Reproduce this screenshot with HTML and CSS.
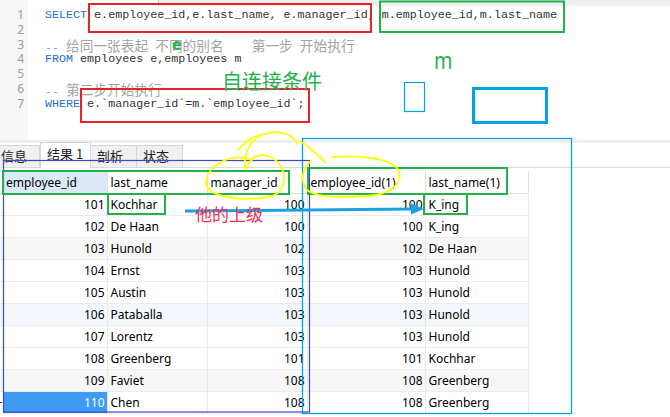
FILE: index.html
```html
<!DOCTYPE html>
<html>
<head>
<meta charset="utf-8">
<link rel="stylesheet" href="styles.css">
</head>
<body>
<div class="app">
  <div class="editor">
    <div class="gutter">
      <div>1</div><div>2</div><div>3</div><div>4</div><div>5</div><div>6</div><div>7</div>
    </div>
    <div class="code">
      <div class="ln"><span class="kw">SELECT</span> e.employee_id,e.last_name, e.manager_id, m.employee_id,m.last_name</div>
      <div class="ln"></div>
      <div class="ln cm">-- <span class="cjk">给同一张表起</span> <span class="cjk">不同的别名</span>    <span class="cjk">第一步</span> <span class="cjk">开始执行</span></div>
      <div class="ln"><span class="kw">FROM</span> employees e,employees m</div>
      <div class="ln"></div>
      <div class="ln cm">-- <span class="cjk">第二步开始执行</span></div>
      <div class="ln"><span class="kw">WHERE</span> e.`manager_id`=m.`employee_id`;</div>
    </div>
  </div>
  <div class="sep"></div>
  <div class="tabs">
    <div class="tab first">信息</div>
    <div class="tab active">结果 1</div>
    <div class="tab">剖析</div>
    <div class="tab">状态</div>
  </div>
  <table class="grid">
    <colgroup>
      <col class="c0"><col class="c1"><col class="c2"><col class="c3"><col class="c4"><col class="c5">
    </colgroup>
    <thead>
      <tr><th></th><th class="selhead">employee_id</th><th>last_name</th><th>manager_id</th><th>employee_id(1)</th><th>last_name(1)</th></tr>
    </thead>
    <tbody>
      <tr><td></td><td class="n">101</td><td>Kochhar</td><td class="n">100</td><td class="n">100</td><td>K_ing</td></tr>
      <tr><td></td><td class="n">102</td><td>De Haan</td><td class="n">100</td><td class="n">100</td><td>K_ing</td></tr>
      <tr class="alt"><td></td><td class="n">103</td><td>Hunold</td><td class="n">102</td><td class="n">102</td><td>De Haan</td></tr>
      <tr><td></td><td class="n">104</td><td>Ernst</td><td class="n">103</td><td class="n">103</td><td>Hunold</td></tr>
      <tr><td></td><td class="n">105</td><td>Austin</td><td class="n">103</td><td class="n">103</td><td>Hunold</td></tr>
      <tr class="hov"><td></td><td class="n">106</td><td>Pataballa</td><td class="n">103</td><td class="n">103</td><td>Hunold</td></tr>
      <tr><td></td><td class="n">107</td><td>Lorentz</td><td class="n">103</td><td class="n">103</td><td>Hunold</td></tr>
      <tr><td></td><td class="n">108</td><td>Greenberg</td><td class="n">101</td><td class="n">101</td><td>Kochhar</td></tr>
      <tr class="alt"><td></td><td class="n">109</td><td>Faviet</td><td class="n">108</td><td class="n">108</td><td>Greenberg</td></tr>
      <tr><td class="ind"></td><td class="n sel">110</td><td>Chen</td><td class="n">108</td><td class="n">108</td><td>Greenberg</td></tr>
    </tbody>
  </table>

  <div class="topstrip"></div>

  <svg class="overlay" width="670" height="417" viewBox="0 0 670 417">
    <rect x="89" y="4" width="282" height="28" fill="none" stroke="#e8222a" stroke-width="2"/>
    <rect x="380" y="1.5" width="184" height="30.5" fill="none" stroke="#22b14c" stroke-width="2"/>
    <rect x="81" y="89" width="228" height="33" fill="none" stroke="#e8222a" stroke-width="2"/>
    <rect x="404.5" y="82.5" width="20" height="29" fill="none" stroke="#00a2e8" stroke-width="1.2"/>
    <rect x="473.5" y="88.5" width="73" height="34" fill="none" stroke="#00a2e8" stroke-width="3"/>
    <rect x="302.5" y="138.5" width="269" height="275" fill="none" stroke="#00a2e8" stroke-width="1.3"/>
    <rect x="3.5" y="160.5" width="306" height="251.5" fill="none" stroke="#3f48cc" stroke-width="1.2"/>
    <rect x="3" y="171" width="286" height="23" fill="none" stroke="#22b14c" stroke-width="2"/>
    <rect x="308" y="168" width="199" height="26" fill="none" stroke="#22b14c" stroke-width="2"/>
    <rect x="108" y="194" width="57" height="20" fill="none" stroke="#22b14c" stroke-width="2"/>
    <rect x="424" y="194" width="43" height="20" fill="none" stroke="#22b14c" stroke-width="2"/>
    <path d="M185 211 L413 209" stroke="#1ba1e2" stroke-width="3" fill="none"/>
    <polygon points="411,203.5 424,209 411,214.5" fill="#1ba1e2"/>
    <g fill="none" stroke="#ffff00" stroke-width="1.8" stroke-linecap="round">
      <path d="M252 160 C 232 152, 207 165, 206 182 C 206 198, 245 202, 272 196 C 290 190, 287 162, 268 156 C 258 153, 250 158, 247 168"/>
      <path d="M245 168 C 244 152, 250 140, 262 135 C 276 129, 293 133, 297 144"/>
      <path d="M238 150 C 244 143, 252 137, 260 135"/>
      <path d="M300 141 C 310 147, 318 155, 325 162"/>
      <path d="M332 157 C 360 155, 393 158, 399 171 C 402 186, 388 195, 366 196 C 342 198, 318 198, 307 190 C 300 181, 302 168, 311 161"/>
    </g>
  </svg>
  <span class="note note-e">e</span>
  <span class="note note-self">自连接条件</span>
  <span class="note note-m">m</span>
  <span class="note note-up">他的上级</span>
</div>
</body>
</html>
```

FILE: styles.css
```css
* { box-sizing: border-box; }
html, body { margin: 0; padding: 0; background: #fff; }
body { width: 670px; height: 417px; overflow: hidden; }

.app {
  position: relative;
  width: 670px;
  height: 417px;
  overflow: hidden;
  font-family: "Noto Sans", "Noto Sans CJK SC", sans-serif;
  color: #000;
}

/* editor */
.editor {
  display: flex;
  height: 140px;
}
.gutter {
  width: 28px;
  background: #f7f7f7;
  padding-top: 8px;
  padding-right: 4px;
  text-align: right;
  color: #9a9a9a;
  font-family: "Noto Sans", sans-serif;
  font-size: 12px;
}
.gutter div { height: 14.8px; line-height: 14.8px; }
.code {
  padding-left: 17px;
  padding-top: 8px;
  font-family: "Liberation Mono", "Noto Sans CJK SC", monospace;
  font-size: 11.7px;
  color: #333;
}
.ln {
  height: 14.8px;
  line-height: 14.8px;
  white-space: pre;
}
.kw { color: #1f6fd8; }
.cm { color: #a3a3a3; }
.cjk {
  font-family: "Noto Sans CJK SC", sans-serif;
  font-size: 13.7px;
  line-height: 14px;
}

.sep {
  height: 3px;
  background: #efefef;
}

/* tabs */
.tabs {
  display: flex;
  align-items: flex-end;
  height: 25px;
  border-bottom: 1px solid #dcdcdc;
  font-family: "Noto Sans CJK SC", sans-serif;
  font-size: 13px;
}
.tab {
  height: 22px;
  line-height: 20px;
  background: #f0f0f0;
  border: 1px solid #d6d6d6;
  border-bottom: none;
  border-left: none;
  padding-left: 6px;
  width: 46px;
  color: #222;
}
.tab.first {
  width: 40px;
  padding-left: 1px;
}
.tab.active {
  width: 51px;
  line-height: 22px;
  background: #fff;
  border-left: 1px solid #d6d6d6;
  padding-left: 6px;
  margin-bottom: -1px;
  height: 26px;
}

/* grid */
.grid {
  margin-top: 3px;
  border-collapse: collapse;
  table-layout: fixed;
  width: 528px;
  font-family: "Noto Sans", "Noto Sans CJK SC", sans-serif;
  font-size: 12px;
}
.c0 { width: 3px; }
.c1 { width: 104px; }
.c2 { width: 100px; }
.c3 { width: 100px; }
.c4 { width: 118px; }
.c5 { width: 103px; }
.grid th, .grid td {
  height: 22px;
  padding: 0 3px;
  border-right: 1px solid #e9e9e9;
  border-bottom: 1px solid #ececec;
  white-space: nowrap;
  overflow: hidden;
  font-weight: normal;
  text-align: left;
}
.grid th:first-child, .grid td:first-child {
  padding: 0;
  border-right: none;
}
.grid th {
  border-bottom: 1px solid #e0e0e0;
  border-right: 1px solid #e0e0e0;
  padding-top: 2px;
}
.grid th.selhead { background: #dbe8f7; }
.grid td.n { text-align: right; padding-right: 2px; }
.grid tr.alt td { background: #f7f7f7; }
.grid tr.hov td { background: #f4f8fc; }
.grid td.sel { background: #3d9bf4 !important; color: #fff; }
.grid td.ind { position: relative; }
.grid td.ind::after {
  content: "";
  position: absolute;
  left: 0;
  top: 10px;
  width: 2px;
  height: 1px;
  background: #333;
}

.topstrip {
  position: absolute;
  left: 158px;
  top: 0;
  width: 512px;
  height: 6px;
  background: #efefef;
  border-left: 1px solid #c8c8c8;
}

/* annotations */
.overlay {
  position: absolute;
  left: 0;
  top: 0;
  pointer-events: none;
}
.note {
  position: absolute;
  white-space: nowrap;
  line-height: 1;
}
.note-e {
  left: 172px;
  top: 36px;
  font-family: "Noto Sans", sans-serif;
  font-weight: bold;
  font-size: 16px;
  color: #22b14c;
}
.note-self {
  left: 222px;
  top: 71px;
  font-family: "Noto Sans CJK SC", sans-serif;
  font-size: 20px;
  color: #22b14c;
}
.note-m {
  left: 434px;
  top: 48px;
  font-family: "Noto Sans", sans-serif;
  font-size: 24px;
  color: #22b14c;
  transform: scaleX(0.82);
  transform-origin: left top;
}
.note-up {
  left: 195px;
  top: 205px;
  font-family: "Noto Sans CJK SC", sans-serif;
  font-size: 17px;
  color: #ee3355;
}
```
